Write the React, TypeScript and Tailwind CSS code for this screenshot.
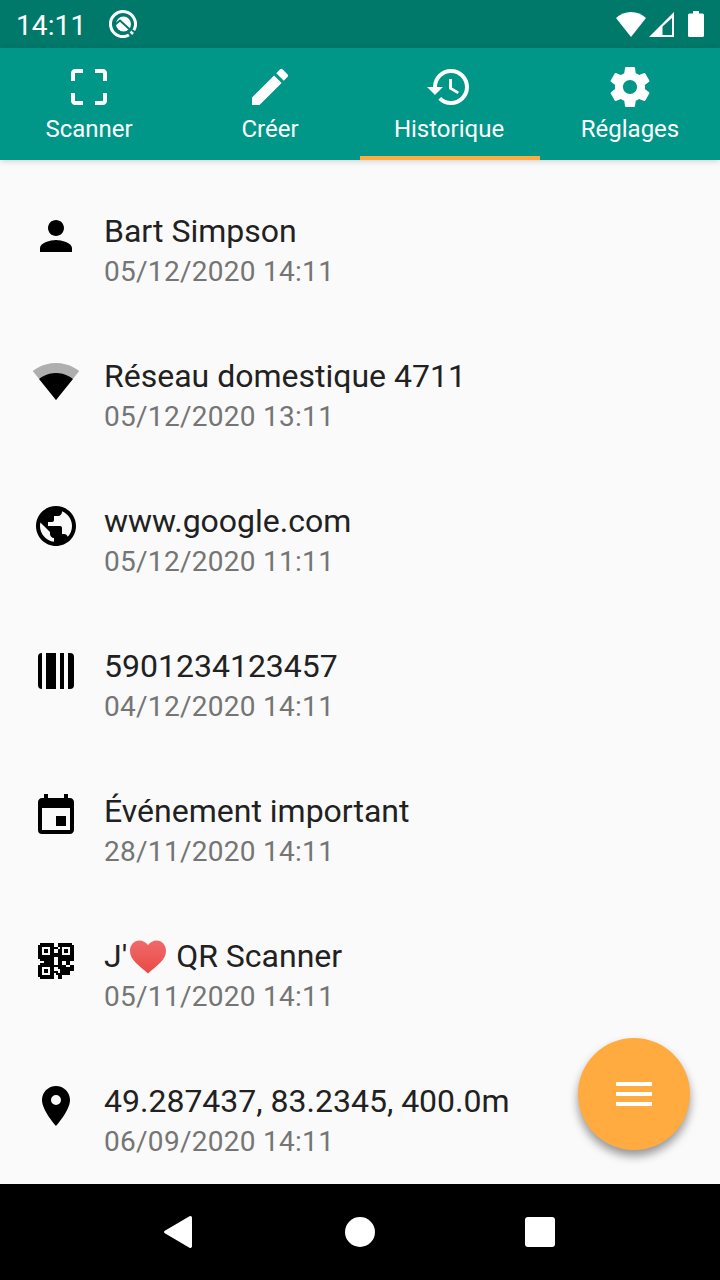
import type { ReactNode } from 'react';
import { MdCropFree, MdEdit, MdEvent, MdHistory, MdMenu, MdPerson, MdPlace, MdPublic } from 'react-icons/md';

interface HistoryItem {
  id: number;
  icon: ReactNode;
  title: ReactNode;
  date: string;
}

const qrRows = [
  '.#######..#######.',
  '########..########',
  '##....####..######',
  '##....##..##....##',
  '##.##.##..##.##.##',
  '##.##.######.##.##',
  '##....######....##',
  '########..########',
  '.#######..########',
  '...#####..##..##..',
  '.#######..##..##..',
  '##############..##',
  '########..########',
  '##....##...#######',
  '##.##.####.#####..',
  '##....##.#######..',
  '########..##......',
  '.#######..##......',
];

// finder squares sit on a slightly different grid from the data cells
const finders = [
  [0, 0],
  [10, 0],
  [0, 10],
];

function SettingsIcon() {
  return (
    <svg viewBox="0 0 24 24" fill="currentColor" className="size-12">
      <path d="M19.430 12.980c.04-.32.07-.64.07-.98s-.03-.66-.07-.98l2.110-1.650c.19-.15.24-.42.12-.64l-2-3.460c-.12-.22-.39-.3-.61-.22l-2.490 1c-.52-.4-1.080-.73-1.690-.98l-.38-2.650C14.460 2.180 14.250 2 14 2h-4c-.25 0-.46.18-.49.42l-.38 2.650c-.61.25-1.170.59-1.690.98l-2.490-1c-.23-.09-.49 0-.61.22l-2 3.460c-.13.22-.07.49.12.64l2.110 1.650c-.04.32-.07.65-.07.98s.03.66.07.98l-2.110 1.650c-.19.15-.24.42-.12.64l2 3.460c.12.22.39.3.61.22l2.490-1c.52.4 1.080.73 1.690.98l.38 2.650c.03.24.24.42.49.42h4c.25 0 .46-.18.49-.42l.38-2.650c.61-.25 1.170-.59 1.690-.98l2.490 1c.23.09.49 0 .61-.22l2-3.460c.12-.22.07-.49-.12-.64l-2.110-1.650zM12 15.500c-1.930 0-3.500-1.570-3.500-3.500s1.570-3.500 3.500-3.500 3.500 1.570 3.500 3.500-1.570 3.500-3.500 3.500z" />
    </svg>
  );
}

function WifiIcon() {
  return (
    <svg viewBox="0 0 24 24" className="size-12">
      <path fillOpacity=".3" d="M12.01 21.49L23.64 7c-.45-.34-4.93-4-11.64-4C5.28 3 .81 6.66.36 7l11.63 14.49.01.01.01-.01z" />
      <path d="M3.53 10.95l8.46 10.54.01.01.01-.01 8.46-10.54C20.04 10.62 16.81 8 12 8c-4.81 0-8.04 2.62-8.47 2.95z" />
    </svg>
  );
}

function BarcodeIcon() {
  return (
    <svg viewBox="0 0 24 24" className="size-12">
      <path d="M5 3v18a2 2 0 0 1-2-2V5a2 2 0 0 1 2-2zM7 3h5v18H7zM14 3h2v18h-2zM18 3h1a2 2 0 0 1 2 2v14a2 2 0 0 1-2 2h-1z" />
    </svg>
  );
}

function QrIcon() {
  return (
    <svg viewBox="-3 -3 24 24" className="size-12" shapeRendering="crispEdges">
      {qrRows.map((row, y) =>
        row.split('').map((cell, x) => (cell === '#' ? <rect key={`${x}-${y}`} x={x} y={y} width="1" height="1" /> : null))
      )}
      {finders.map(([x, y]) => (
        <g key={`${x}-${y}`}>
          <rect x={x + 1} y={y + 1} width="6" height="6" />
          <rect x={x + 2} y={y + 2} width="4" height="4" fill="#fafafa" />
          <rect x={x + 3} y={y + 3} width="2" height="2" />
        </g>
      ))}
    </svg>
  );
}

function HeartIcon() {
  return (
    <svg viewBox="0 0 36 34" className="ml-[3px] mr-[2px] inline-block h-[34px] w-9 align-[-7px]">
      <defs>
        <linearGradient id="heart" x1="0" y1="0" x2="0" y2="1">
          <stop offset="0" stopColor="#f06a6a" />
          <stop offset="1" stopColor="#e84a45" />
        </linearGradient>
      </defs>
      <path fill="url(#heart)" d="M18 5C15.5 2 12.5.5 9.500.5 4 .5 0 5 0 11c0 9.500 10 15 18 22.500C26 26 36 20.500 36 11 36 5 32 .5 26.500.5 23.500.5 20.500 2 18 5z" />
    </svg>
  );
}

const tabs = [
  { label: 'Scanner', icon: <MdCropFree className="size-12" />, className: 'pr-[2px]' },
  { label: 'Créer', icon: <MdEdit className="size-12" />, className: '' },
  { label: 'Historique', icon: <MdHistory className="size-12" />, className: 'pr-[2px]' },
  { label: 'Réglages', icon: <SettingsIcon />, className: '' },
];

const items: HistoryItem[] = [
  { id: 1, icon: <MdPerson className="size-12" />, title: 'Bart Simpson', date: '05/12/2020 14:11' },
  { id: 2, icon: <WifiIcon />, title: 'Réseau domestique 4711', date: '05/12/2020 13:11' },
  { id: 3, icon: <MdPublic className="size-12" />, title: 'www.google.com', date: '05/12/2020 11:11' },
  { id: 4, icon: <BarcodeIcon />, title: '5901234123457', date: '04/12/2020 14:11' },
  { id: 5, icon: <MdEvent className="size-12" />, title: 'Événement important', date: '28/11/2020 14:11' },
  { id: 6, icon: <QrIcon />, title: <>J'<HeartIcon /> QR Scanner</>, date: '05/11/2020 14:11' },
  { id: 7, icon: <MdPlace className="size-12" />, title: '49.287437, 83.2345, 400.0m', date: '06/09/2020 14:11' },
];

function StatusBar() {
  return (
    <div className="flex h-12 shrink-0 items-center bg-[#00796b] pl-4 pr-4 text-white">
      <span className="w-[93px] pt-[2px] text-[28px] leading-[33px] tracking-[0.1px]">14:11</span>
      <svg viewBox="0 0 28 28" fill="none" className="size-7">
        <path stroke="#fff" strokeWidth="3" d="M20 25A12.500 12.500 0 1 1 24.800 20.300" />
        <circle cx="14.500" cy="14" r="7.500" fill="#fff" />
        <path stroke="#00796b" strokeWidth="2" d="M5 15.500l6-5L23 21.500" />
        <path stroke="#fff" strokeWidth="2.500" d="M21.500 21.500l2.500 2.500" />
      </svg>
      <div className="ml-auto flex items-center">
        <svg viewBox="0 0 30 25" className="mr-[3px] h-[25px] w-[30px]">
          <path fill="#fff" d="M15 25L0 6C8-2 22-2 30 6z" />
        </svg>
        <svg viewBox="0 0 25 25" className="mr-[14px] h-[25px] w-[25px]">
          <path fill="#fff" fillRule="evenodd" d="M25 0v25H0zM13.500 14.500V23H23V6z" />
        </svg>
        <svg viewBox="0 0 16 26" className="h-[26px] w-4">
          <path fill="#fff" d="M5 0h6v2.500h3.500A1.500 1.500 0 0 1 16 4v20.500a1.500 1.500 0 0 1-1.500 1.500h-13A1.500 1.500 0 0 1 0 24.500V4a1.500 1.500 0 0 1 1.500-1.500H5z" />
        </svg>
      </div>
    </div>
  );
}

function TabBar({ active }: { active: string }) {
  return (
    <nav className="z-10 grid h-28 shrink-0 grid-cols-4 bg-[#009688] text-white shadow-[0_1px_6px_rgba(0,0,0,0.18)]">
      {tabs.map((tab) => (
        <button
          key={tab.label}
          className={`flex flex-col items-center border-b-4 pt-[15px] ${tab.className} ${
            tab.label === active ? 'border-[#ffab40]' : 'border-transparent'
          }`}
        >
          {tab.icon}
          <span className="mt-1 text-2xl leading-7">{tab.label}</span>
        </button>
      ))}
    </nav>
  );
}

export default function App() {
  return (
    <div className="relative flex h-[1280px] w-[720px] flex-col overflow-hidden bg-[#fafafa] font-['Roboto',sans-serif]">
      <StatusBar />
      <TabBar active="Historique" />

      <ul className="min-h-0 flex-1 overflow-hidden pt-[52px]">
        {items.map((item) => (
          <li key={item.id} className="flex h-[145px] gap-6 px-8">
            <div className="size-12 shrink-0 text-black">{item.icon}</div>
            <div>
              <p className="h-[38px] whitespace-nowrap text-[32px] leading-[38px] text-[#212121]">{item.title}</p>
              <p className="mt-[5px] text-[28px] leading-[33px] tracking-[0.28px] text-[#757575]">{item.date}</p>
            </div>
          </li>
        ))}
      </ul>

      <button
        aria-label="Menu"
        className="absolute bottom-[130px] right-[30px] flex size-28 items-center justify-center rounded-full bg-[#ffab40] text-white shadow-[0_6px_10px_rgba(0,0,0,0.4)]"
      >
        <MdMenu className="size-12" />
      </button>

      <div className="flex h-24 shrink-0 items-center justify-center bg-black">
        <div className="flex w-[180px] justify-center">
          <svg viewBox="0 0 28 32" className="mr-1 h-8 w-7">
            <path fill="#fff" d="M.8 14.700L25.500.3A1.700 1.700 0 0 1 28 1.800v28.400a1.700 1.700 0 0 1-2.500 1.500L.8 17.300a1.500 1.500 0 0 1 0-2.600z" />
          </svg>
        </div>
        <div className="flex w-[180px] justify-center">
          <div className="size-[30px] rounded-full bg-white" />
        </div>
        <div className="flex w-[180px] justify-center">
          <div className="size-[30px] rounded-[3px] bg-white" />
        </div>
      </div>
    </div>
  );
}
